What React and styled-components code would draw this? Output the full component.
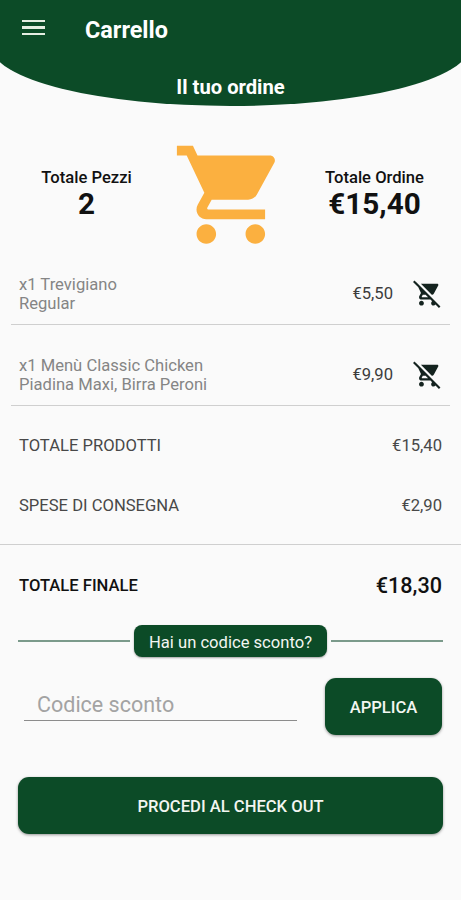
import React from 'react';
import styled, { createGlobalStyle } from 'styled-components';

const green = '#0c4b27';

const GlobalStyle = createGlobalStyle`
  * { box-sizing: border-box; }
  body { margin: 0; background: #fafafa; font-family: Roboto, sans-serif; color: #111; }
  button, input { font-family: inherit; }
`;

const Screen = styled.main`
  width: 461px;
  height: 900px;
  overflow: hidden;
  display: flex;
  flex-direction: column;
  background: #fafafa;
`;

const Header = styled.header`
  flex: none;
  height: 106px;
  margin: 0 -8px;
  padding: 0 8px;
  background: ${green};
  color: #fff;
  border-radius: 0 0 50% 50% / 0 0 59px 59px;
`;

const TopBar = styled.div`
  height: 58px;
  display: flex;
  align-items: center;
  padding-left: 22px;
`;

const MenuButton = styled.button`
  width: 23px;
  height: 16px;
  margin: 0 40px 3px 0;
  padding: 0;
  border: 0;
  background: none;
  display: flex;
  flex-direction: column;
  justify-content: space-between;
`;

const MenuLine = styled.span`
  height: 2.4px;
  background: #e6eee2;
`;

const Title = styled.h1`
  margin: 2px 0 0;
  font-size: 23.4px;
  line-height: 28px;
  font-weight: 700;
`;

const Subtitle = styled.h2`
  margin: 0;
  text-align: center;
  font-size: 20.2px;
  line-height: 58px;
  font-weight: 700;
`;

const Summary = styled.section`
  height: 138px;
  padding: 30px 24px 0 29px;
  display: grid;
  grid-template-columns: 115px 1fr 125px;
`;

const Stat = styled.div`
  padding-top: 32px;
  text-align: center;
`;

const StatLabel = styled.div`
  font-size: 16.6px;
  line-height: 20px;
  font-weight: 500;
  white-space: nowrap;
`;

const StatValue = styled.div`
  font-size: 29.7px;
  line-height: 32px;
  font-weight: 700;
`;

const CartDrawing = styled.svg`
  width: 117.6px;
  height: 117.6px;
  margin-left: 28px;
  fill: #fbb040;
`;

const Item = styled.article`
  height: 81px;
  margin: 0 11px;
  padding: 20px 8px 0;
  border-bottom: 1px solid #cfcfcf;
  display: flex;
  align-items: center;
`;

const ItemText = styled.div`
  flex: 1;
  color: #858585;
  font-size: 16.6px;
  line-height: 19.5px;
`;

const ItemPrice = styled.span`
  font-size: 16.6px;
  color: #3c3c3c;
  margin: 0 20px 2px 0;
`;

const RemoveButton = styled.button`
  width: 29px;
  height: 29px;
  margin-bottom: 2px;
  padding: 0;
  border: 0;
  background: none;
`;

const RemoveIcon = styled.svg`
  display: block;
  width: 29px;
  height: 29px;
  fill: #14231f;
`;

const Totals = styled.section`
  height: 139px;
  padding: 9px 19px 0;
  border-bottom: 1px solid #cfcfcf;
`;

const TotalRow = styled.div`
  height: 60px;
  display: flex;
  align-items: center;
  justify-content: space-between;
  font-size: 16.6px;
  color: #484848;
`;

const FinalRow = styled.div`
  height: 80px;
  padding: 0 19px;
  display: flex;
  align-items: center;
  justify-content: space-between;
  font-size: 16.6px;
  font-weight: 500;
`;

const FinalAmount = styled.span`
  font-size: 21.6px;
`;

const CouponHeading = styled.div`
  height: 32px;
  margin: 0 18px;
  display: flex;
  align-items: center;
  gap: 4px;
`;

const Rule = styled.span`
  flex: 1;
  height: 2px;
  background: #7b9a8b;
`;

const CouponTag = styled.span`
  width: 193px;
  height: 32px;
  border-radius: 8px;
  background: ${green};
  color: #f3f6f1;
  font-size: 16.6px;
  line-height: 35px;
  text-align: center;
  white-space: nowrap;
  box-shadow: 0 1px 2px rgba(0, 0, 0, 0.35);
`;

const CouponForm = styled.div`
  margin: 21px 19px 0 24px;
  display: flex;
  justify-content: space-between;
`;

const CouponInput = styled.input`
  width: 273px;
  height: 43px;
  padding: 10px 13px 0;
  border: 0;
  border-bottom: 1px solid #8c8c8c;
  border-radius: 0;
  outline: 0;
  background: none;
  font-size: 21.5px;

  &::placeholder { color: #a3a3a3; opacity: 1; }
`;

const Button = styled.button`
  width: ${({ $width }) => $width};
  height: 57px;
  padding: 2px 0 0;
  border: 0;
  border-radius: 11px;
  background: ${green};
  color: #f3f6f1;
  font-size: 16.6px;
  font-weight: 500;
  box-shadow: 0 1px 3px rgba(0, 0, 0, 0.4);
`;

const Checkout = styled.div`
  margin: 42px 18px 0;
`;

const items = [
  { name: 'x1 Trevigiano', detail: 'Regular', price: '€5,50' },
  { name: 'x1 Menù Classic Chicken', detail: 'Piadina Maxi, Birra Peroni', price: '€9,90' },
];

const totals = [
  ['TOTALE PRODOTTI', '€15,40'],
  ['SPESE DI CONSEGNA', '€2,90'],
];

export default function App() {
  return (
    <>
      <GlobalStyle />
      <Screen>
        <Header>
          <TopBar>
            <MenuButton aria-label="Menu">
              <MenuLine />
              <MenuLine />
              <MenuLine />
            </MenuButton>
            <Title>Carrello</Title>
          </TopBar>
          <Subtitle>Il tuo ordine</Subtitle>
        </Header>

        <Summary>
          <Stat>
            <StatLabel>Totale Pezzi</StatLabel>
            <StatValue>2</StatValue>
          </Stat>
          <CartDrawing viewBox="0 0 24 24">
            <path d="M7 18c-1.1 0-1.99.9-1.99 2S5.9 22 7 22s2-.9 2-2-.9-2-2-2zM1 2v2h2l3.6 7.59-1.35 2.45c-.16.28-.25.61-.25.96 0 1.1.9 2 2 2h12v-2H7.42c-.14 0-.25-.11-.25-.25l.03-.12.9-1.63h7.45c.75 0 1.41-.41 1.75-1.03l3.58-6.49c.08-.14.12-.31.12-.48 0-.55-.45-1-1-1H5.21l-.94-2H1zm16 16c-1.1 0-1.99.9-1.99 2s.89 2 1.99 2 2-.9 2-2-.9-2-2-2z" />
          </CartDrawing>
          <Stat>
            <StatLabel>Totale Ordine</StatLabel>
            <StatValue>€15,40</StatValue>
          </Stat>
        </Summary>

        {items.map((item) => (
          <Item key={item.name}>
            <ItemText>
              {item.name}
              <br />
              {item.detail}
            </ItemText>
            <ItemPrice>{item.price}</ItemPrice>
            <RemoveButton aria-label="Rimuovi">
              <RemoveIcon viewBox="0 0 24 24">
                <path d="M22.73 22.73L2.77 2.77 2 2l-.73-.73L0 2.54l4.39 4.39 2.21 4.66-1.35 2.45c-.16.28-.25.61-.25.96 0 1.1.9 2 2 2h7.46l1.38 1.38c-.5.36-.83.95-.83 1.62 0 1.1.89 2 1.99 2 .67 0 1.26-.33 1.62-.84L21.46 24l1.27-1.27zM7.42 15c-.14 0-.25-.11-.25-.25l.03-.12.9-1.63h2.36l2 2H7.42zm8.13-2c.75 0 1.41-.41 1.75-1.03l3.58-6.49c.08-.14.12-.31.12-.48 0-.55-.45-1-1-1H6.54l9.01 9zM7 18c-1.1 0-1.99.9-1.99 2S5.9 22 7 22s2-.9 2-2-.9-2-2-2z" />
              </RemoveIcon>
            </RemoveButton>
          </Item>
        ))}

        <Totals>
          {totals.map(([label, amount]) => (
            <TotalRow key={label}>
              <span>{label}</span>
              <span>{amount}</span>
            </TotalRow>
          ))}
        </Totals>
        <FinalRow>
          <span>TOTALE FINALE</span>
          <FinalAmount>€18,30</FinalAmount>
        </FinalRow>

        <CouponHeading>
          <Rule />
          <CouponTag>Hai un codice sconto?</CouponTag>
          <Rule />
        </CouponHeading>
        <CouponForm>
          <CouponInput placeholder="Codice sconto" />
          <Button $width="117px">APPLICA</Button>
        </CouponForm>
        <Checkout>
          <Button $width="100%">PROCEDI AL CHECK OUT</Button>
        </Checkout>
      </Screen>
    </>
  );
}
